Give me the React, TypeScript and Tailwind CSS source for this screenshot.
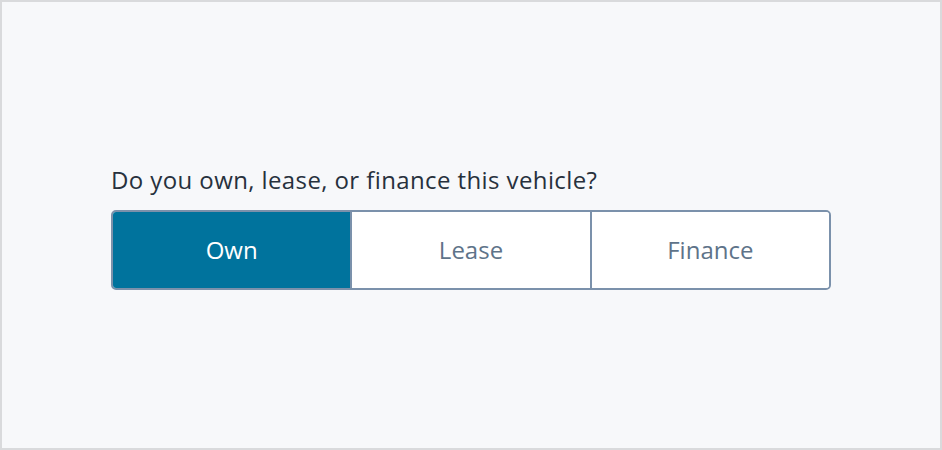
import React from "react";

export default function App() {
  const opts = ["Own", "Lease", "Finance"];
  return (
    <div className="w-[942px] h-[450px] bg-[#f7f8fa] border-2 border-[#d9dadc] box-border" style={{ fontFamily: "'Open Sans', 'Noto Sans', sans-serif" }}>
      <div className="pl-[109px] pt-[162px]">
        <div className="text-[24px] leading-[32px] tracking-[0.4px] text-[#27313d] mb-[14px]">Do you own, lease, or finance this vehicle?</div>
        <div className="flex w-[720px] h-[80px] border-2 border-[#7b91ab] rounded-[5px] overflow-hidden">
          {opts.map((o, i) => (
            <div
              key={o}
              className={
                "flex-1 flex items-center justify-center text-[24px] pb-[1px] " +
                (i === 0 ? "bg-[#00739d] text-white" : "bg-white text-[#5e7389] border-l-2 border-[#7b91ab]")
              }
            >
              {o}
            </div>
          ))}
        </div>
      </div>
    </div>
  );
}
